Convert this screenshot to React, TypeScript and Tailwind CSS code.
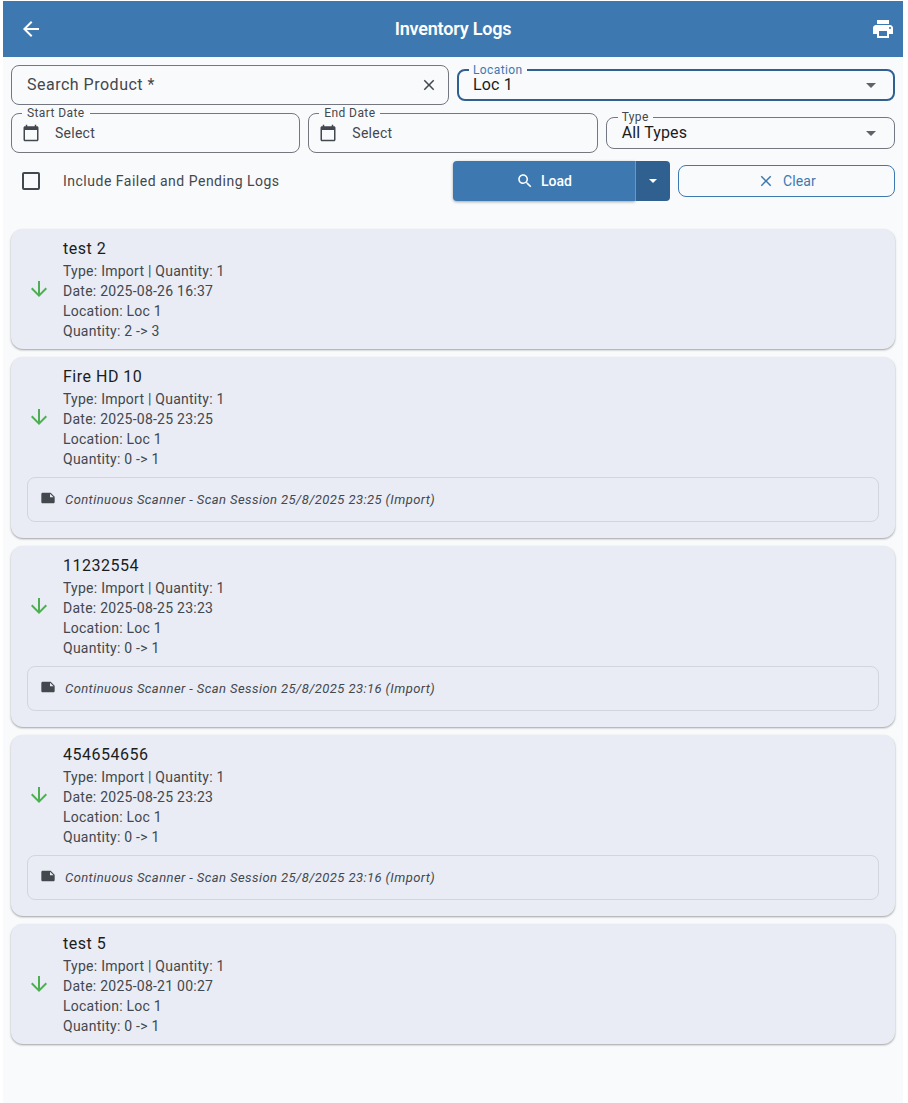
const FONT = "font-['Roboto',sans-serif]";

const LOGS = [
  { name: "test 2", date: "2025-08-26 16:37", qty: "2 -> 3" },
  {
    name: "Fire HD 10",
    date: "2025-08-25 23:25",
    qty: "0 -> 1",
    note: "Continuous Scanner - Scan Session 25/8/2025 23:25 (Import)",
  },
  {
    name: "11232554",
    date: "2025-08-25 23:23",
    qty: "0 -> 1",
    note: "Continuous Scanner - Scan Session 25/8/2025 23:16 (Import)",
  },
  {
    name: "454654656",
    date: "2025-08-25 23:23",
    qty: "0 -> 1",
    note: "Continuous Scanner - Scan Session 25/8/2025 23:16 (Import)",
  },
  { name: "test 5", date: "2025-08-21 00:27", qty: "0 -> 1" },
];

function Icon({ d, className }: { d: string; className: string }) {
  return (
    <svg viewBox="0 0 24 24" className={`shrink-0 ${className}`}>
      <path d={d} />
    </svg>
  );
}

const BACK = "M20 11H7.83l5.59-5.59L12 4l-8 8 8 8 1.41-1.41L7.83 13H20v-2z";
const PRINT =
  "M19 8H5c-1.66 0-3 1.34-3 3v6h4v4h12v-4h4v-6c0-1.66-1.34-3-3-3zm-3 11H8v-5h8v5zm3-7c-.55 0-1-.45-1-1s.45-1 1-1 1 .45 1 1-.45 1-1 1zm-1-9H6v4h12V3z";
const CLOSE =
  "M19 6.41L17.59 5 12 10.59 6.41 5 5 6.41 10.59 12 5 17.59 6.41 19 12 13.41 17.59 19 19 17.59 13.41 12z";
const SEARCH =
  "M15.5 14h-.79l-.28-.27C15.41 12.59 16 11.11 16 9.5 16 5.91 13.09 3 9.5 3S3 5.91 3 9.5 5.91 16 9.5 16c1.61 0 3.09-.59 4.23-1.57l.27.28v.79l5 4.99L20.49 19l-4.99-5zm-6 0C7.01 14 5 11.99 5 9.5S7.01 5 9.5 5 14 7.01 14 9.5 11.99 14 9.5 14z";
const CALENDAR =
  "M20 3h-1V1h-2v2H7V1H5v2H4c-1.1 0-2 .9-2 2v16c0 1.1.9 2 2 2h16c1.1 0 2-.9 2-2V5c0-1.1-.9-2-2-2zm0 18H4V8h16v13z";
const NOTE =
  "M22 10l-6-6H4c-1.1 0-2 .9-2 2v12.01c0 1.1.9 1.99 2 1.99l16-.01c1.1 0 2-.89 2-1.99v-8zm-7-4.5l5.5 5.5H15V5.5z";
const DOWN = "M20 12l-1.41-1.41L13 16.17V4h-2v12.17l-5.58-5.59L4 12l8 8 8-8z";

function DateField({ label }: { label: string }) {
  return (
    <div className="relative flex h-10 items-center rounded-lg border border-[#74777f] pl-[10px]">
      <span className="absolute -top-[9px] left-[10px] bg-[#f9fafc] px-[5px] text-xs leading-4 tracking-[0.4px] text-[#43474e]">
        {label}
      </span>
      <Icon d={CALENDAR} className="h-[18px] w-[18px] fill-[#43474e]" />
      <span className="ml-[15px] text-sm tracking-[0.25px] text-[#43474e]">Select</span>
    </div>
  );
}

function SelectField({ label, value, focused }: { label: string; value: string; focused?: boolean }) {
  return (
    <div
      className={`relative flex h-8 items-center justify-between rounded-lg ${
        focused ? "border-2 border-[#2f6090] pl-[14px] pr-[17px]" : "border border-[#74777f] pl-[15px] pr-[18px]"
      }`}
    >
      <span
        className={`absolute -top-[9px] bg-[#f9fafc] px-[4px] text-xs leading-4 tracking-[0.4px] ${
          focused ? "left-[10px] text-[#3d79b0]" : "left-[11px] text-[#43474e]"
        }`}
      >
        {label}
      </span>
      <span className="text-base leading-6 tracking-[0.15px] text-[#1a1c1e]">{value}</span>
      <span className="h-0 w-0 border-x-[5px] border-t-[5px] border-x-transparent border-t-[#5f6368]" />
    </div>
  );
}

function NoteRow({ note }: { note?: string }) {
  if (!note) return null;
  return (
    <div className="mt-2 mb-2 flex h-[45px] items-center rounded-lg border border-[#d2d5dd] pl-[12px]">
      <Icon d={NOTE} className="mb-[3px] h-4 w-4 fill-[#43474e]" />
      <span className="ml-[9px] text-[13px] italic tracking-[0.42px] text-[#43474e]">{note}</span>
    </div>
  );
}

function LogCard({ log }: { log: (typeof LOGS)[number] }) {
  return (
    <div className="rounded-xl bg-[#e9ecf4] px-4 py-2 shadow-[0_1px_2px_rgba(0,0,0,0.3),0_1px_3px_rgba(0,0,0,0.08)]">
      <div className="flex items-center">
        <Icon d={DOWN} className="h-6 w-6 fill-[#4caf50]" />
        <div className="ml-3">
          <div className="text-base leading-6 tracking-[0.5px] text-[#1a1c1e]">{log.name}</div>
          <div className="text-sm leading-5 tracking-[0.25px] text-[#43474e]">
            <div>Type: Import | Quantity: 1</div>
            <div>Date: {log.date}</div>
            <div>Location: Loc 1</div>
            <div>Quantity: {log.qty}</div>
          </div>
        </div>
      </div>
      <NoteRow note={log.note} />
    </div>
  );
}

export default function App() {
  return (
    <div className={`${FONT} min-h-[1103px] bg-white pl-[3px] pr-[5px] pt-px`}>
      <div className="min-h-[1102px] bg-[#f9fafc]">
        <header className="grid h-14 grid-cols-[1fr_auto_1fr] items-center bg-[#3d79b0] px-2 text-white">
          <Icon d={BACK} className="ml-2 h-6 w-6 fill-white" />
          <h1 className="text-lg font-semibold tracking-[-0.2px]">Inventory Logs</h1>
          <Icon d={PRINT} className="h-6 w-6 justify-self-end fill-white" />
        </header>

        <div className="px-2 pt-2">
          <div className="grid grid-cols-2 gap-2">
            <div className="flex h-10 items-center justify-between rounded-lg border border-[#74777f] pl-[15px] pr-[10px]">
              <span className="text-base tracking-[0.5px] text-[#43474e]">Search Product *</span>
              <Icon d={CLOSE} className="h-[18px] w-[18px] fill-[#43474e]" />
            </div>
            <div className="pt-1">
              <SelectField label="Location" value="Loc 1" focused />
            </div>
          </div>

          <div className="mt-2 grid grid-cols-3 gap-2">
            <DateField label="Start Date" />
            <DateField label="End Date" />
            <div className="pt-1">
              <SelectField label="Type" value="All Types" />
            </div>
          </div>

          <div className="mt-2 flex h-10 items-center">
            <div className="ml-[11px] h-[18px] w-[18px] rounded-[2px] border-2 border-[#43474e]" />
            <span className="ml-[23px] w-[390px] text-sm tracking-[0.5px] text-[#43474e]">
              Include Failed and Pending Logs
            </span>
            <div className="flex h-10 w-[217px] rounded">
              <div className="flex flex-1 items-center justify-center gap-[7px] rounded-l bg-[#3d79b0] text-sm font-medium text-white shadow-[0_1px_3px_rgba(0,0,0,0.35)]">
                <Icon d={SEARCH} className="h-[18px] w-[18px] fill-white" />
                Load
              </div>
              <div className="flex w-[35px] items-center justify-center rounded-r border-l border-[#6f97bd] bg-[#2f6090]">
                <span className="h-0 w-0 border-x-4 border-t-4 border-x-transparent border-t-white" />
              </div>
            </div>
            <div className="ml-2 flex h-8 flex-1 items-center justify-center gap-[8px] rounded-lg border border-[#3d79b0] text-sm tracking-[0.1px] text-[#3d79b0]">
              <Icon d={CLOSE} className="h-[18px] w-[18px] fill-[#3d79b0]" />
              Clear
            </div>
          </div>

          <div className="mt-7 flex flex-col gap-2">
            {LOGS.map((log) => (
              <LogCard key={log.name} log={log} />
            ))}
          </div>
        </div>
      </div>
    </div>
  );
}
